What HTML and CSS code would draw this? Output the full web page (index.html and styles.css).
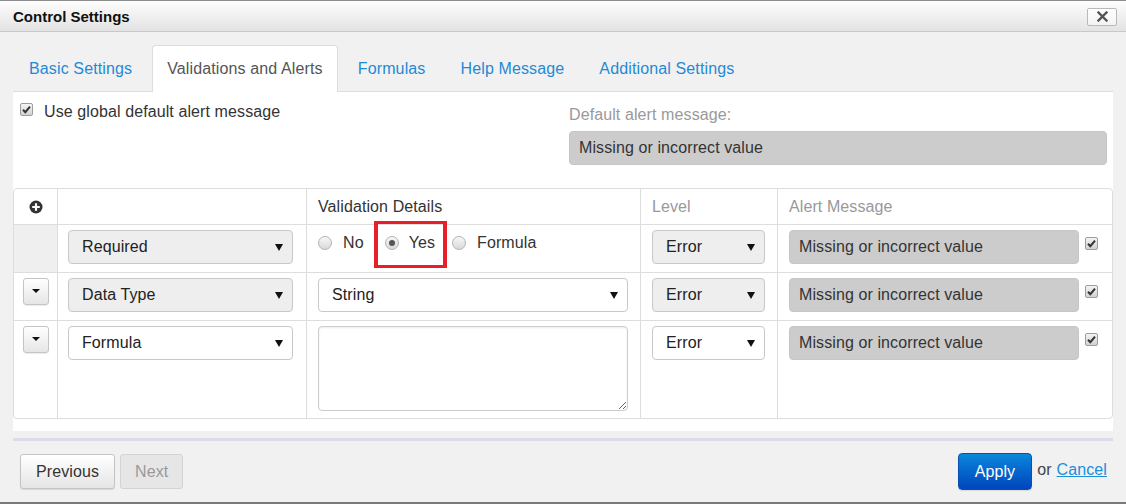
FILE: index.html
```html
<!DOCTYPE html>
<html>
<head>
<meta charset="utf-8">
<link rel="stylesheet" href="styles.css">
</head>
<body>
<div class="dialog">
  <div class="titlebar">
    <span class="title">Control Settings</span>
    <button class="close" type="button" aria-label="Close">
      <svg width="11" height="11" viewBox="0 0 11 11"><path d="M1.5 1.5 L9.5 9.5 M9.5 1.5 L1.5 9.5" stroke="#555" stroke-width="2.4" stroke-linecap="square"/></svg>
    </button>
  </div>
  <div class="body">
    <ul class="tabs">
      <li class="tab">Basic Settings</li>
      <li class="tab active">Validations and Alerts</li>
      <li class="tab">Formulas</li>
      <li class="tab">Help Message</li>
      <li class="tab">Additional Settings</li>
    </ul>
    <div class="panel">
      <div class="global-row">
        <label class="global-label">
          <span class="chk"><svg width="11" height="11" viewBox="0 0 11 11"><path d="M2 5.8 L4.3 8.2 L9 2.6" fill="none" stroke="#333" stroke-width="2"/></svg></span>
          <span>Use global default alert message</span>
        </label>
        <div class="default-msg">
          <div class="muted-label">Default alert message:</div>
          <div class="field gray">Missing or incorrect value</div>
        </div>
      </div>

      <div class="vgrid">
        <div class="hcell c1"><svg width="14" height="14" viewBox="0 0 14 14"><circle cx="7" cy="7" r="6.5" fill="#333"/><path d="M7 3.2 V10.8 M3.2 7 H10.8" stroke="#fff" stroke-width="2.2"/></svg></div>
        <div class="hcell c2"></div>
        <div class="hcell c3 dark">Validation Details</div>
        <div class="hcell c4">Level</div>
        <div class="hcell c5">Alert Message</div>

        <!-- row 1 -->
        <div class="cell c1 shaded"></div>
        <div class="cell c2"><div class="select filled"><span>Required</span><svg class="arrow" width="8" height="7" viewBox="0 0 8 7"><path d="M0 0 H8 L4 7 Z" fill="#111"/></svg></div></div>
        <div class="cell c3 rel">
          <div class="radios">
            <span class="opt"><span class="radio"></span>No</span>
            <span class="opt yes"><span class="radio on"></span>Yes</span>
            <span class="opt"><span class="radio"></span>Formula</span>
          </div>
          <div class="highlight"></div>
        </div>
        <div class="cell c4"><div class="select filled"><span>Error</span><svg class="arrow" width="8" height="7" viewBox="0 0 8 7"><path d="M0 0 H8 L4 7 Z" fill="#111"/></svg></div></div>
        <div class="cell c5"><div class="field gray grow">Missing or incorrect value</div><span class="chk small"><svg width="11" height="11" viewBox="0 0 11 11"><path d="M2 5.8 L4.3 8.2 L9 2.6" fill="none" stroke="#333" stroke-width="2"/></svg></span></div>

        <!-- row 2 -->
        <div class="cell c1"><button class="caret-btn" type="button"><span class="caret"></span></button></div>
        <div class="cell c2"><div class="select filled"><span>Data Type</span><svg class="arrow" width="8" height="7" viewBox="0 0 8 7"><path d="M0 0 H8 L4 7 Z" fill="#111"/></svg></div></div>
        <div class="cell c3"><div class="select"><span>String</span><svg class="arrow" width="8" height="7" viewBox="0 0 8 7"><path d="M0 0 H8 L4 7 Z" fill="#111"/></svg></div></div>
        <div class="cell c4"><div class="select filled"><span>Error</span><svg class="arrow" width="8" height="7" viewBox="0 0 8 7"><path d="M0 0 H8 L4 7 Z" fill="#111"/></svg></div></div>
        <div class="cell c5"><div class="field gray grow">Missing or incorrect value</div><span class="chk small"><svg width="11" height="11" viewBox="0 0 11 11"><path d="M2 5.8 L4.3 8.2 L9 2.6" fill="none" stroke="#333" stroke-width="2"/></svg></span></div>

        <!-- row 3 -->
        <div class="cell c1 last"><button class="caret-btn" type="button"><span class="caret"></span></button></div>
        <div class="cell c2 last"><div class="select"><span>Formula</span><svg class="arrow" width="8" height="7" viewBox="0 0 8 7"><path d="M0 0 H8 L4 7 Z" fill="#111"/></svg></div></div>
        <div class="cell c3 last"><textarea class="formula"></textarea></div>
        <div class="cell c4 last"><div class="select"><span>Error</span><svg class="arrow" width="8" height="7" viewBox="0 0 8 7"><path d="M0 0 H8 L4 7 Z" fill="#111"/></svg></div></div>
        <div class="cell c5 last"><div class="field gray grow">Missing or incorrect value</div><span class="chk small"><svg width="11" height="11" viewBox="0 0 11 11"><path d="M2 5.8 L4.3 8.2 L9 2.6" fill="none" stroke="#333" stroke-width="2"/></svg></span></div>
      </div>
    </div>
    <div class="divider"></div>
    <div class="footer">
      <div class="nav-btns">
        <button class="btn" type="button">Previous</button>
        <button class="btn disabled" type="button">Next</button>
      </div>
      <div class="actions">
        <button class="btn primary" type="button">Apply</button>
        <span class="or">or</span>
        <a class="cancel" href="#">Cancel</a>
      </div>
    </div>
  </div>
</div>
</body>
</html>
```

FILE: styles.css
```css
* { box-sizing: border-box; }
html, body { margin: 0; padding: 0; }
body {
  font-family: "Liberation Sans", Arial, sans-serif;
  font-size: 16px;
  letter-spacing: 0.1px;
  color: #333;
  background: #f1f1f1;
}
.dialog {
  width: 1126px;
  height: 504px;
  background: #f1f1f1;
  border-top: 1px solid #8c8c8c;
  border-bottom: 2px solid #7a7a7a;
  overflow: hidden;
}
.titlebar {
  height: 31px;
  display: flex;
  align-items: center;
  justify-content: space-between;
  padding: 0 9px 0 13px;
  background: linear-gradient(#fdfdfd, #e3e3e3);
  border-bottom: 1px solid #c9c9c9;
}
.title {
  font-weight: bold;
  font-size: 15px;
  letter-spacing: 0;
  color: #111;
}
.close {
  width: 30px;
  height: 18px;
  padding: 0;
  margin-top: 1px;
  display: flex;
  align-items: center;
  justify-content: center;
  background: linear-gradient(#ffffff, #f3f3f3);
  border: 1px solid #b9b9b9;
  border-radius: 2px;
}
.body { padding: 0 13px; }
.tabs {
  list-style: none;
  margin: 13px 0 0;
  padding: 0 0 0 1px;
  display: flex;
  gap: 5px;
  position: relative;
  z-index: 1;
}
.tab {
  padding: 12px 14px 12px;
  line-height: 22px;
  letter-spacing: 0.13px;
  border: 1px solid transparent;
  border-bottom: 0;
  border-radius: 4px 4px 0 0;
  color: #1e8ad6;
}
.tab.active {
  background: #fff;
  border-color: #dddddd;
  color: #555;
}
.panel {
  margin-top: -1px;
  background: #fff;
  border-top: 1px solid #dddddd;
  padding-bottom: 12px;
}
.global-row {
  display: flex;
  padding: 10px 6px 0 7px;
}
.global-label {
  flex: 1;
  display: flex;
  align-items: flex-start;
  gap: 11px;
  line-height: 20px;
  color: #333;
}
.chk {
  width: 13px;
  height: 13px;
  margin-top: 1px;
  flex: none;
  display: flex;
  align-items: center;
  justify-content: center;
  border: 1px solid #9c9c9c;
  border-radius: 2px;
  background: linear-gradient(#f4f4f4, #d2d2d2);
}
.default-msg {
  width: 538px;
  margin-top: 1px;
}
.muted-label {
  line-height: 22px;
  padding-top: 1px;
  color: #999;
  margin-bottom: 5px;
}
.field {
  height: 34px;
  line-height: 32px;
  padding-left: 9px;
  border: 1px solid #c6c6c6;
  border-radius: 4px;
  color: #333;
  white-space: nowrap;
}
.field.gray { background: #cccccc; }
.vgrid {
  margin-top: 23px;
  display: grid;
  grid-template-columns: 44px 249px 334px 137px 1fr;
  border: 1px solid #dddddd;
  border-radius: 4px;
  overflow: hidden;
}
.hcell {
  height: 36px;
  line-height: 35px;
  padding: 0 11px;
  border-bottom: 1px solid #dddddd;
  border-right: 1px solid #dddddd;
  color: #999;
}
.hcell.dark { color: #333; }
.hcell.c1 {
  display: flex;
  align-items: center;
  justify-content: center;
  padding: 0;
}
.hcell.c5, .cell.c5 { border-right: 0; }
.cell {
  padding: 5px 12px 7px 11px;
  border-bottom: 1px solid #dddddd;
  border-right: 1px solid #dddddd;
  min-height: 48px;
}
.cell.last { border-bottom: 0; }
.cell.c1 {
  padding: 5px 0 7px;
  display: flex;
  justify-content: center;
  align-items: flex-start;
}
.cell.c2 { padding-left: 10px; padding-right: 13px; }
.cell.c5 {
  display: flex;
  align-items: flex-start;
  padding-right: 14px;
}
.cell.shaded { background: #efefef; }
.rel { position: relative; }
.select {
  height: 34px;
  display: flex;
  align-items: center;
  justify-content: space-between;
  padding: 0 9px 0 13px;
  border: 1px solid #c8c8c8;
  border-radius: 4px;
  background: #fff;
  color: #222;
  white-space: nowrap;
}
.select.filled { background: #eeeeee; }
.arrow { flex: none; margin-top: 1px; }
.radios {
  height: 26px;
  display: flex;
  align-items: center;
  color: #333;
}
.opt {
  display: flex;
  align-items: center;
  gap: 11px;
}
.opt.yes { margin: 0 17px 0 21px; gap: 10px; }
.radio {
  width: 14px;
  height: 14px;
  border-radius: 50%;
  border: 1px solid #b3b3b3;
  background: linear-gradient(#f7f7f7, #d9d9d9);
  display: flex;
  align-items: center;
  justify-content: center;
}
.radio.on::after {
  content: "";
  width: 6px;
  height: 6px;
  border-radius: 50%;
  background: #555;
}
.highlight {
  position: absolute;
  left: 67px;
  top: -4px;
  width: 73px;
  height: 47px;
  border: 3px solid #e61f2a;
  border-left-width: 4px;
  border-right-width: 4px;
  z-index: 2;
}
.grow { flex: 1; }
.chk.small { margin: 7px 0 0 6px; }
.caret-btn {
  width: 26px;
  height: 27px;
  padding: 0;
  display: flex;
  align-items: center;
  justify-content: center;
  border: 1px solid #c4c4c4;
  border-radius: 3px;
  background: linear-gradient(#ffffff, #e6e6e6);
  box-shadow: 0 1px 1px rgba(0,0,0,0.08);
}
.caret {
  width: 0;
  height: 0;
  border-left: 4px solid transparent;
  border-right: 4px solid transparent;
  border-top: 4px solid #111;
  margin-top: -1px;
}
.formula {
  display: block;
  width: 100%;
  height: 85px;
  margin: 0;
  border: 1px solid #cccccc;
  border-radius: 4px;
  box-shadow: inset 0 1px 2px rgba(0,0,0,0.08);
  resize: vertical;
  font-family: inherit;
  font-size: 16px;
}
.divider {
  margin-top: 7px;
  height: 3px;
  background: #dcdbea;
}
.footer {
  display: flex;
  align-items: center;
  justify-content: space-between;
  padding: 12px 6px 0 7px;
}
.nav-btns { display: flex; align-items: center; gap: 5px; }
.btn {
  height: 35px;
  padding: 0 15px;
  font-family: inherit;
  font-size: 16px;
  letter-spacing: 0.1px;
  color: #333;
  border: 1px solid #c4c4c4;
  border-radius: 3px;
  background: linear-gradient(#ffffff, #e5e5e5);
  box-shadow: 0 1px 1px rgba(0,0,0,0.1);
}
.btn.disabled {
  color: #999;
  background: #e6e6e6;
  border-color: #d3d3d3;
  box-shadow: none;
  padding: 0 14px;
}
.actions { display: flex; align-items: center; }
.btn.primary {
  height: 37px;
  padding: 0 16px;
  color: #fff;
  border-color: #0950b5;
  border-radius: 4px;
  background: linear-gradient(#0a86da, #0045bd);
}
.or { margin-left: 5px; color: #444; margin-top: -3px; }
.cancel {
  margin-left: 5px;
  color: #1b8fd8;
  text-decoration: underline;
  margin-top: -3px;
}
```
